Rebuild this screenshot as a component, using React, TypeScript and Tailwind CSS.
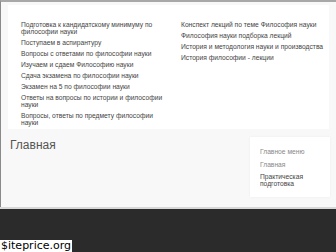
import React from 'react';

const leftLinks = [
  'Подготовка к кандидатскому минимуму по философии науки',
  'Поступаем в аспирантуру',
  'Вопросы с ответами по философии науки',
  'Изучаем и сдаем Философию науки',
  'Сдача экзамена по философии науки',
  'Экзамен на 5 по философии науки',
  'Ответы на вопросы по истории и философии науки',
  'Вопросы, ответы по предмету философии науки',
];

const rightLinks = [
  'Конспект лекций по теме Философия науки',
  'Философия науки подборка лекций',
  'История и методология науки и производства',
  'История философии - лекции',
];

const App = () => {
  return (
    <div
      className="relative w-[336px] h-[252px] overflow-hidden bg-[#f8f8f8] flex flex-col"
      style={{ fontFamily: '"Liberation Sans", Arial, sans-serif' }}
    >
      <div className="flex-1 flex flex-col border-t-2 border-l border-t-[#a8a8a8] border-l-[#8a8a8a]">
        {/* Link panel */}
        <div className="mx-[7px] mt-[3px] h-[124px] bg-white flex pt-[16px] pl-[13px]">
          <div className="w-[160px] shrink-0 flex flex-col gap-[4px]">
            {leftLinks.map((l) => (
              <a key={l} href="#" className="block w-[150px] text-[6.7px] leading-[7px] text-[#444]">
                {l}
              </a>
            ))}
          </div>
          <div className="flex-1 flex flex-col gap-[4px]">
            {rightLinks.map((l) => (
              <a key={l} href="#" className="block whitespace-nowrap text-[6.7px] leading-[7px] text-[#444]">
                {l}
              </a>
            ))}
          </div>
        </div>

        {/* Content + sidebar */}
        <div className="flex justify-between mt-[8px] pl-[9px] pr-[6px]">
          <h1 className="text-[12px] leading-[14px] text-[#555] mt-[1px]">Главная</h1>
          <div className="w-[80px] h-[60px] bg-white shadow-[0_0_2px_rgba(0,0,0,0.06)] pt-[11px] pl-[10px]">
            <div className="text-[6.7px] leading-[8px] text-[#888]">Главное меню</div>
            <div className="text-[6.7px] leading-[8px] text-[#888] mt-[5px]">Главная</div>
            <div className="text-[6.7px] leading-[7px] text-[#444] mt-[4px] w-[60px]">Практическая подготовка</div>
          </div>
        </div>
      </div>

      {/* Footer */}
      <div className="h-[45px] bg-[#2b2b2b] border-t-2 border-t-[#d8d8d8]"></div>

      <div
        className="absolute left-0 bottom-0 bg-white text-black text-[11px] leading-[12px] px-[1px]"
        style={{ fontFamily: '"DejaVu Sans", sans-serif' }}
      >
        $iteprice.org
      </div>
    </div>
  );
};

export default App;
